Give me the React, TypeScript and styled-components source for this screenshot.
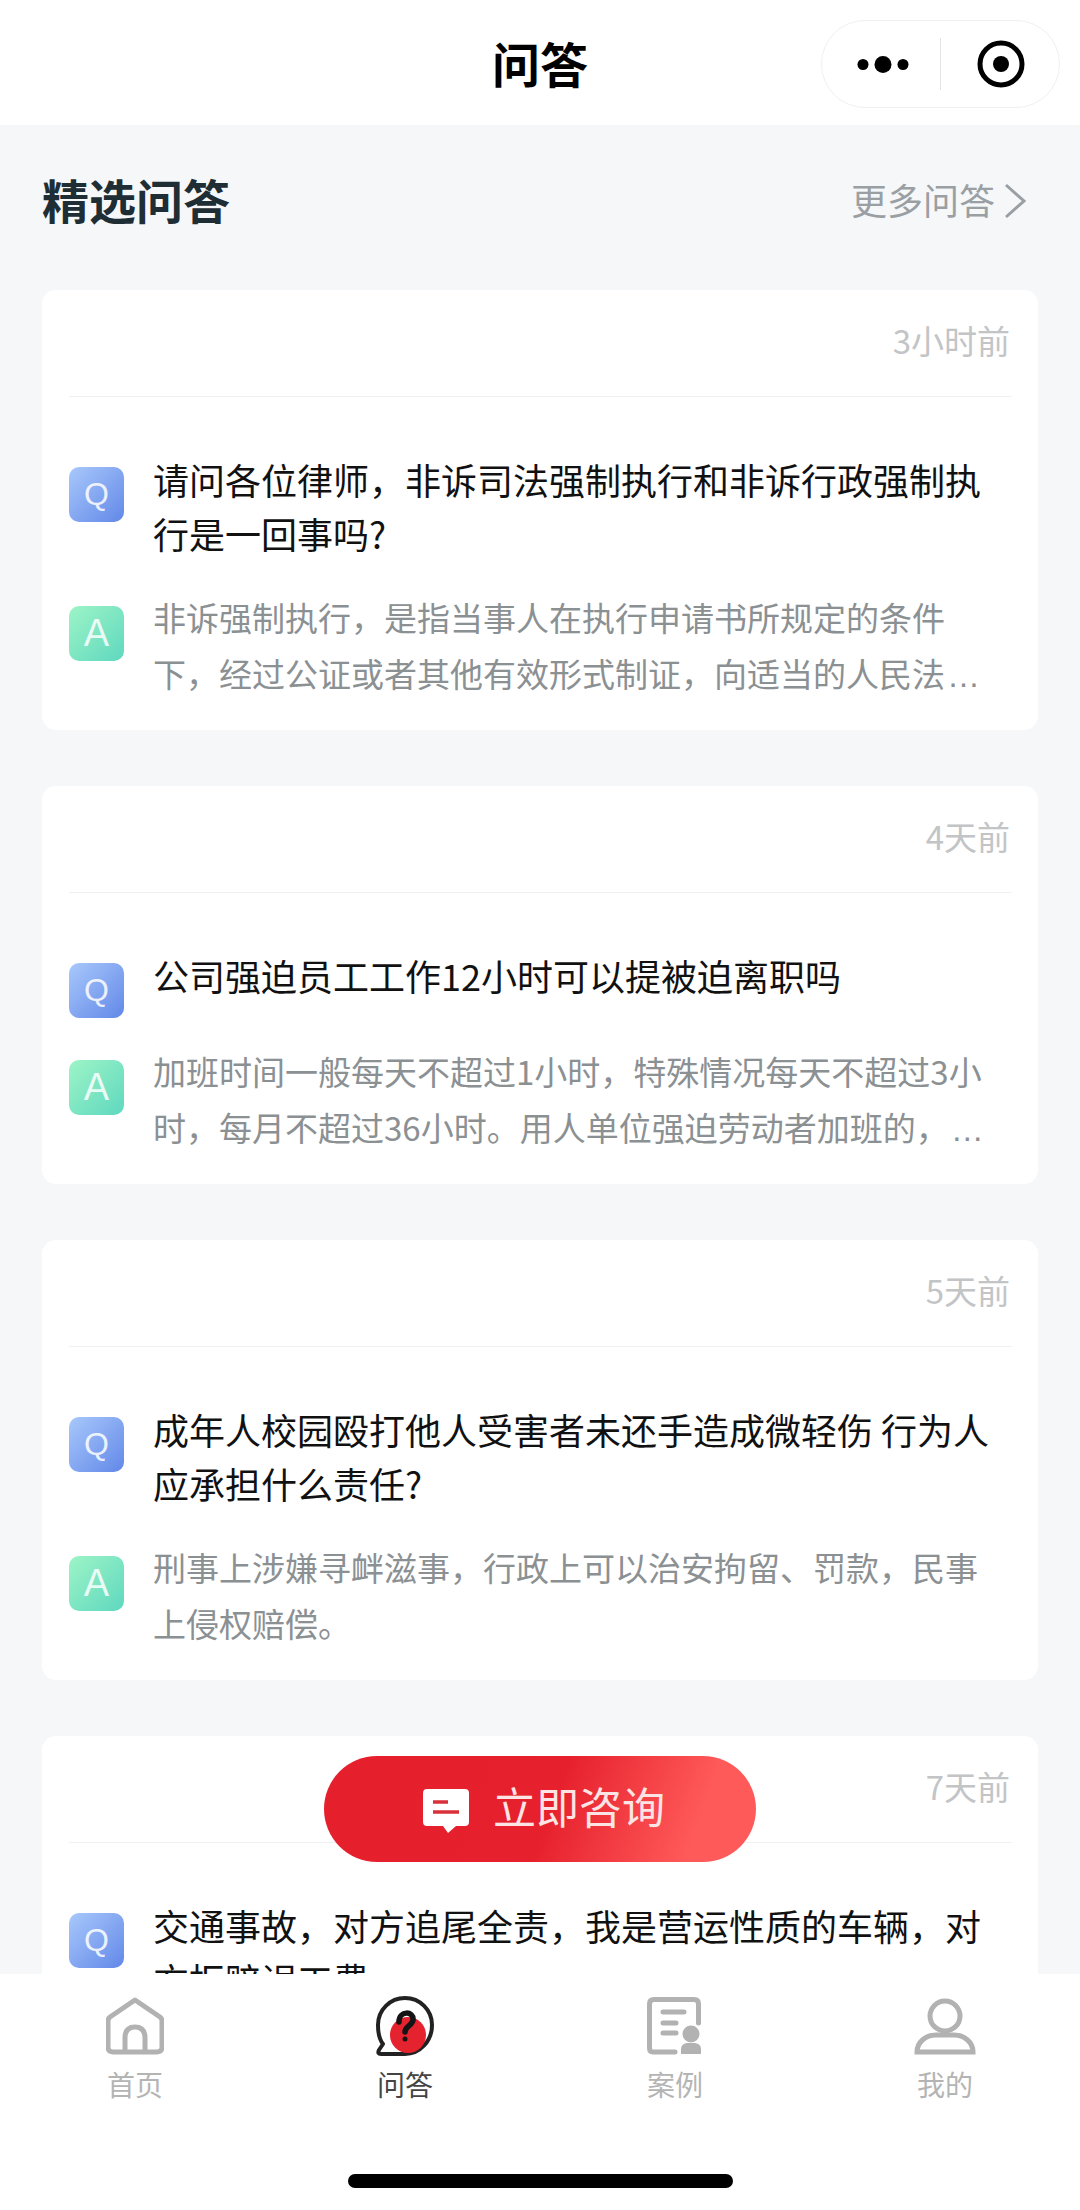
import styled, { createGlobalStyle } from 'styled-components';

const GlobalStyle = createGlobalStyle`
    html, body {
        margin: 0;
        padding: 0;
        background: #f5f7f9;
        font-family: "Noto Sans CJK SC", "Noto Sans", sans-serif;
    }
`;

const questions = [
    {
        id: 1,
        time: '3小时前',
        title: '请问各位律师，非诉司法强制执行和非诉行政强制执行是一回事吗?',
        answer: '非诉强制执行，是指当事人在执行申请书所规定的条件下，经过公证或者其他有效形式制证，向适当的人民法',
        more: true,
    },
    {
        id: 2,
        time: '4天前',
        title: '公司强迫员工工作12小时可以提被迫离职吗',
        answer: '加班时间一般每天不超过1小时，特殊情况每天不超过3小时，每月不超过36小时。用人单位强迫劳动者加班的，',
        more: true,
    },
    {
        id: 3,
        time: '5天前',
        title: '成年人校园殴打他人受害者未还手造成微轻伤 行为人应承担什么责任?',
        answer: '刑事上涉嫌寻衅滋事，行政上可以治安拘留、罚款，民事上侵权赔偿。',
        more: false,
    },
    {
        id: 4,
        time: '7天前',
        title: '交通事故，对方追尾全责，我是营运性质的车辆，对方拒赔误工费',
        answer: '',
        more: false,
    },
];

const HomeIcon = () => (
    <svg width="58" height="58" viewBox="0 0 58 58" fill="none" stroke="#b2b2b2" strokeWidth="5" strokeLinejoin="round">
        <path d="M29 3 L54 20 Q56 21.5 56 24 V50 Q56 55 51 55 H7 Q2 55 2 50 V24 Q2 21.5 4 20 Z" />
        <path d="M19 55 V41 Q19 30 29 30 Q39 30 39 41 V55" />
    </svg>
);

const AnswerIcon = () => (
    <svg width="60" height="62" viewBox="0 0 60 62" fill="none">
        <path d="M30 3 C45 3 57 15 57 30 C57 46 45 59 30 59 H6 Q2 59 4 55 L8 49 C4 44 3 37 3 30 C3 15 15 3 30 3 Z" stroke="#222222" strokeWidth="4" strokeLinejoin="round" />
        <circle cx="33" cy="40" r="18" fill="#e5232e" />
        <path d="M24 27 C24 15 39 16 38 25 C37 31 30 31 30 37" stroke="#141414" strokeWidth="5.500" strokeLinecap="round" />
        <circle cx="30" cy="44" r="2.500" fill="#141414" />
    </svg>
);

const CaseIcon = () => (
    <svg width="56" height="58" viewBox="0 0 56 58" fill="none">
        <path d="M28 55 H6 Q2.500 55 2.500 51 V7 Q2.500 2.500 7 2.500 H47 Q51.500 2.500 51.500 7 V26" stroke="#b2b2b2" strokeWidth="5" strokeLinecap="round" />
        <path d="M16 15 H37 M16 26 H29 M16 36 H29" stroke="#b2b2b2" strokeWidth="5" strokeLinecap="round" />
        <circle cx="44" cy="37" r="8.500" fill="#b2b2b2" />
        <path d="M34 57 V52 Q34 47 40 46 H48 Q54 47 54 52 V57 Z" fill="#b2b2b2" />
    </svg>
);

const UserIcon = () => (
    <svg width="62" height="58" viewBox="0 0 62 58" fill="none" stroke="#b2b2b2" strokeWidth="5">
        <circle cx="31" cy="19" r="15" />
        <path d="M3 55 C3 45 12 38 22 38 H40 C50 38 59 45 59 55 Z" strokeLinejoin="miter" />
    </svg>
);

const tabs = [
    { label: '首页', icon: <HomeIcon />, active: false },
    { label: '问答', icon: <AnswerIcon />, active: true },
    { label: '案例', icon: <CaseIcon />, active: false },
    { label: '我的', icon: <UserIcon />, active: false },
];

const App = () => {
    return (
        <Shell>
            <GlobalStyle />
            <NavBar>
                <NavTitle>问答</NavTitle>
                <Capsule>
                    <svg width="52" height="17" viewBox="0 0 52 17">
                        <circle cx="6" cy="8.500" r="5.500" fill="#000" />
                        <circle cx="26" cy="8.500" r="8.500" fill="#000" />
                        <circle cx="46" cy="8.500" r="5.500" fill="#000" />
                    </svg>
                    <CapsuleDivider />
                    <svg width="48" height="48" viewBox="0 0 48 48">
                        <circle cx="24" cy="24" r="21" fill="none" stroke="#000" strokeWidth="5" />
                        <circle cx="24" cy="24" r="8" fill="#000" />
                    </svg>
                </Capsule>
            </NavBar>

            <Main>
                <SectionHeader>
                    <SectionTitle>精选问答</SectionTitle>
                    <MoreLink>
                        更多问答
                        <svg width="22" height="36" viewBox="0 0 22 36" fill="none" stroke="#9a9fa3" strokeWidth="3">
                            <path d="M2 2 L20 18 L2 34" />
                        </svg>
                    </MoreLink>
                </SectionHeader>

                <CardList>
                    {questions.map((item) => (
                        <Card key={item.id}>
                            <CardHeader>
                                <TimeText>{item.time}</TimeText>
                            </CardHeader>
                            <QuestionRow>
                                <Badge $kind="q">Q</Badge>
                                <QuestionText>{item.title}</QuestionText>
                            </QuestionRow>
                            {item.answer && (
                                <AnswerRow>
                                    <Badge $kind="a">A</Badge>
                                    <AnswerText>
                                        {item.answer}
                                        {item.more && <MoreDots>…</MoreDots>}
                                    </AnswerText>
                                </AnswerRow>
                            )}
                        </Card>
                    ))}
                </CardList>
            </Main>

            <FloatButton>
                <svg width="46" height="44" viewBox="0 0 46 44">
                    <path d="M4 0 H42 Q46 0 46 4 V33 Q46 37 42 37 H33 L25 44 L20 37 H4 Q0 37 0 33 V4 Q0 0 4 0 Z" fill="#fff" />
                    <path d="M10 13 H25 M10 23 H36" stroke="#d9303a" strokeWidth="3.500" fill="none" />
                </svg>
                <ButtonLabel>立即咨询</ButtonLabel>
            </FloatButton>

            <TabBar>
                <TabRow>
                    {tabs.map((tab) => (
                        <TabItem key={tab.label} $active={tab.active}>
                            <TabIcon>{tab.icon}</TabIcon>
                            {tab.label}
                        </TabItem>
                    ))}
                </TabRow>
                <HomeIndicator />
            </TabBar>
        </Shell>
    );
};

const Shell = styled.div`
    position: relative;
    display: flex;
    flex-direction: column;
    width: 1080px;
    height: 2210px;
    overflow: hidden;
    background: #f5f7f9;
`;

const NavBar = styled.header`
    position: relative;
    flex: none;
    box-sizing: border-box;
    display: flex;
    align-items: center;
    justify-content: center;
    height: 125px;
    padding-bottom: 2px;
    background: #fff;
`;

const NavTitle = styled.h1`
    margin: 0;
    font-size: 48px;
    font-weight: 700;
    color: #000;
`;

const Capsule = styled.div`
    position: absolute;
    top: 20px;
    left: 821px;
    box-sizing: border-box;
    display: flex;
    align-items: center;
    width: 239px;
    height: 88px;
    padding-left: 35px;
    background: #fff;
    border: 1px solid #f0f0f0;
    border-radius: 44px;
`;

const CapsuleDivider = styled.span`
    width: 1px;
    height: 52px;
    margin: 0 36px 0 31px;
    background: #e4e4e4;
`;

const Main = styled.main`
    flex: 1;
    min-height: 0;
    overflow: hidden;
`;

const SectionHeader = styled.div`
    box-sizing: border-box;
    display: flex;
    align-items: center;
    justify-content: space-between;
    height: 152px;
    padding: 0 54px 5px 42px;
`;

const SectionTitle = styled.h2`
    margin: 0;
    font-size: 47px;
    font-weight: 700;
    color: #1f2d35;
`;

const MoreLink = styled.div`
    display: flex;
    align-items: center;
    gap: 9px;
    font-size: 36px;
    color: #9a9fa3;

    svg {
        margin-top: 5px;
    }
`;

const CardList = styled.div`
    display: flex;
    flex-direction: column;
    gap: 56px;
    padding: 13px 42px 0 42px;
`;

const Card = styled.article`
    flex: none;
    padding: 0 26px 29px 27px;
    background: #fff;
    border-radius: 14px;
`;

const CardHeader = styled.div`
    box-sizing: border-box;
    display: flex;
    align-items: center;
    justify-content: flex-end;
    height: 107px;
    margin: 0 0 55px;
    padding: 0 2px 7px 0;
    border-bottom: 1px solid #f0f0f0;
`;

const TimeText = styled.span`
    font-size: 33px;
    color: #c2c4c6;
`;

const QuestionRow = styled.div`
    display: flex;
    gap: 29px;
`;

const AnswerRow = styled(QuestionRow)`
    margin-top: 29px;
`;

const Badge = styled.span<{ $kind: 'q' | 'a' }>`
    flex: none;
    display: flex;
    align-items: center;
    justify-content: center;
    width: 55px;
    height: 55px;
    margin-top: ${(props) => (props.$kind === 'q' ? '15px' : '17px')};
    margin-bottom: ${(props) => (props.$kind === 'q' ? '-4px' : '0')};
    border-radius: 10px;
    background: ${(props) =>
        props.$kind === 'q'
            ? 'linear-gradient(135deg, #a9c8fb, #6288e8)'
            : 'linear-gradient(135deg, #9df4c6, #5fd8bf)'};
    font-family: "Liberation Sans", sans-serif;
    font-size: ${(props) => (props.$kind === 'q' ? '32px' : '38px')};
    color: rgba(255, 255, 255, 0.85);
`;

const QuestionText = styled.p`
    width: 840px;
    margin: 0;
    font-size: 36px;
    line-height: 54px;
    color: #111;
`;

const AnswerText = styled.p`
    width: 840px;
    margin: 0;
    font-size: 33px;
    line-height: 56px;
    color: #8b9093;
`;

const MoreDots = styled.span`
    margin-left: 2px;
    font-family: "Liberation Sans", sans-serif;
    line-height: 0;
    letter-spacing: 2px;
`;

const FloatButton = styled.button`
    position: absolute;
    left: 324px;
    bottom: 348px;
    display: flex;
    align-items: center;
    justify-content: center;
    gap: 24px;
    width: 432px;
    height: 106px;
    padding: 0 0 0 8px;
    border: none;
    border-radius: 53px;
    background: linear-gradient(110deg, #e51f2b 0%, #e6202c 52%, #ff5a5a 85%, #ff5a5a 100%);
    font-family: inherit;
    font-size: 43px;
    color: #fde4e4;

    svg {
        margin-top: 3px;
    }
`;

const ButtonLabel = styled.span`
    margin-bottom: 8px;
`;

const TabBar = styled.nav`
    position: relative;
    flex: none;
    height: 236px;
    background: #fff;
`;

const TabRow = styled.div`
    display: grid;
    grid-template-columns: repeat(4, 270px);
`;

const TabItem = styled.div<{ $active: boolean }>`
    display: flex;
    flex-direction: column;
    align-items: center;
    padding-top: 21px;
    font-size: 28px;
    line-height: 40px;
    color: ${(props) => (props.$active ? '#444' : '#b4b4b4')};
`;

const TabIcon = styled.div`
    display: flex;
    align-items: center;
    justify-content: center;
    height: 62px;
    margin-bottom: 7px;
`;

const HomeIndicator = styled.div`
    position: absolute;
    left: 348px;
    top: 200px;
    width: 385px;
    height: 14px;
    border-radius: 7px;
    background: #000;
`;

export default App;
